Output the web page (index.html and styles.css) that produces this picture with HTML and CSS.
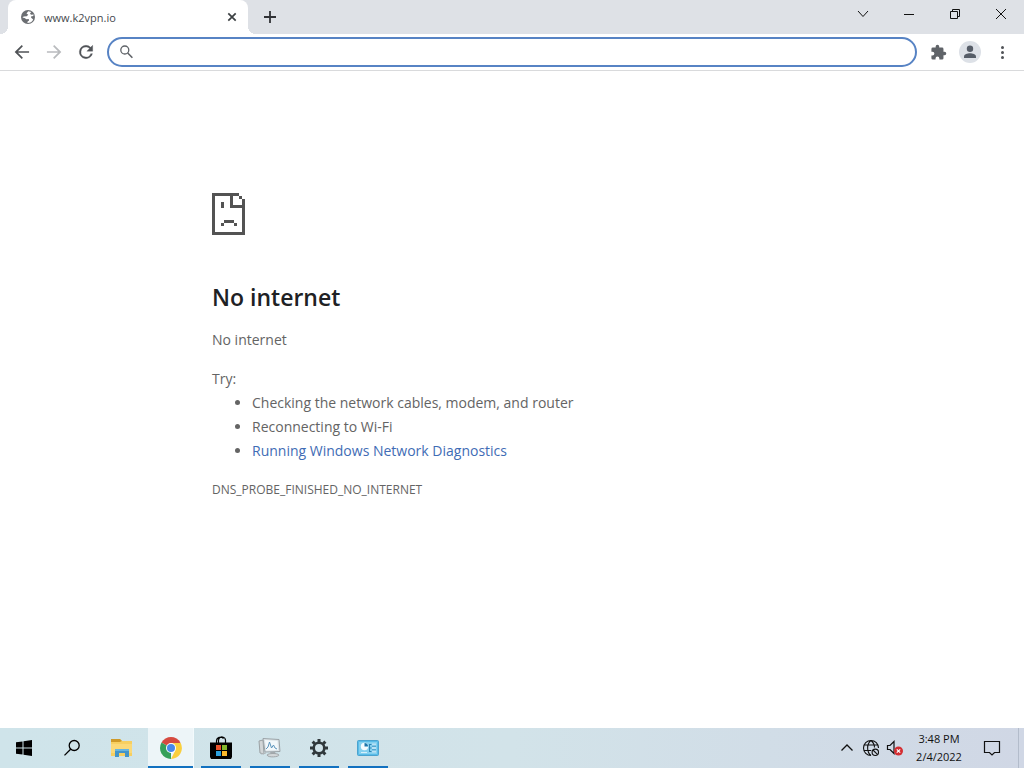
FILE: index.html
```html
<!DOCTYPE html>
<html lang="en">

	<head>
		<meta charset="UTF-8">
		<title>www.k2vpn.io</title>
		<link rel="stylesheet" href="styles.css">
	</head>

	<body>
		<header class="tabstrip">
			<div class="tab">
				<svg class="favicon" width="16" height="16" viewBox="0 0 16 16">
					<circle cx="8" cy="8" r="7" fill="#6b6e72" />
					<path d="M8.2 2.3L6.5 4.5l1.8 1.2-1.6 1.6-3 .1-1.3 1.2 2.2.4 1.8 1.3 2.3-.2.4 1.3-1.5 1-.2 1.6c2.6 0 5-1.4 5.8-3.6l-2-1.6-.2-1.4 2.2-.5.5-1.5-2.7.4-1-1.2 1.3-1.6z" fill="#fff" />
				</svg>
				<span class="tab-title">www.k2vpn.io</span>
				<button class="tab-close" aria-label="Close tab">
					<svg width="16" height="16" viewBox="0 0 16 16"><path d="M4.3 4.3l7.4 7.4M11.7 4.3l-7.4 7.4" fill="none" stroke="#3c4043" stroke-width="1.7" /></svg>
				</button>
			</div>
			<button class="new-tab" aria-label="New tab">
				<svg width="16" height="16" viewBox="0 0 16 16"><path d="M8 2v12M2 8h12" fill="none" stroke="#303236" stroke-width="1.8" /></svg>
			</button>
			<div class="window-controls">
				<button aria-label="Search tabs"><svg width="12" height="12" viewBox="0 0 12 12"><path d="M1 3l5 5.5L11 3" /></svg></button>
				<button aria-label="Minimize"><svg width="12" height="12" viewBox="0 0 12 12"><path d="M1 6.5h10" /></svg></button>
				<button aria-label="Restore"><svg width="12" height="12" viewBox="0 0 12 12"><path d="M1.5 3.5h7v7h-7zM3.5 3.5v-2h7v7h-2" /></svg></button>
				<button aria-label="Close"><svg width="12" height="12" viewBox="0 0 12 12"><path d="M1 1l10 10M11 1L1 11" /></svg></button>
			</div>
		</header>

		<nav class="toolbar">
			<div class="tools">
				<button aria-label="Back"><svg width="20" height="20" viewBox="0 0 24 24"><path d="M20.5 11H7.2l5.9-5.9L11.7 3.5 3.2 12l8.5 8.5 1.4-1.6L7.2 13h13.3z" fill="#505357" /></svg></button>
				<button aria-label="Forward" disabled><svg width="20" height="20" viewBox="0 0 24 24"><path d="M3.5 11h13.3l-5.9-5.9 1.4-1.6 8.5 8.5-8.5 8.5-1.4-1.6 5.9-5.9H3.5z" fill="#b9bbbe" /></svg></button>
				<button aria-label="Reload"><svg width="20" height="20" viewBox="0 0 24 24"><path d="M17.65 6.35A7.96 7.96 0 0 0 12 4a8 8 0 1 0 7.73 10h-2.08A6 6 0 1 1 12 6c1.66 0 3.14.69 4.22 1.78L13 11h7V4z" fill="#505357" stroke="#505357" stroke-width="0.4" /></svg></button>
			</div>
			<form class="omnibox">
				<svg width="16" height="16" viewBox="0 0 16 16"><circle cx="5.8" cy="6" r="4" fill="none" stroke="#5f6368" stroke-width="1.3" /><path d="M8.7 9l4.7 4.7" stroke="#5f6368" stroke-width="1.6" /></svg>
				<input type="text" aria-label="Address and search bar">
			</form>
			<div class="tools">
				<button aria-label="Extensions"><svg width="17" height="17" viewBox="0 0 24 24"><path d="M20.5 11H19V7a2 2 0 0 0-2-2h-4V3.5a2.5 2.5 0 0 0-5 0V5H4a2 2 0 0 0-2 2v3.8h1.5a2.7 2.7 0 0 1 0 5.4H2V20a2 2 0 0 0 2 2h3.8v-1.5a2.7 2.7 0 0 1 5.4 0V22H17a2 2 0 0 0 2-2v-4h1.5a2.5 2.5 0 0 0 0-5z" fill="#5f6368" /></svg></button>
				<button class="avatar" aria-label="Profile"><svg width="22" height="22" viewBox="0 0 22 22"><circle cx="11" cy="11" r="11" fill="#dde1e7" /><circle cx="11" cy="7.8" r="3.2" fill="#565d68" /><path d="M5 17v-1.6c0-2.2 3.5-3.2 6-3.2s6 1 6 3.2V17z" fill="#565d68" /></svg></button>
				<button aria-label="Menu"><svg width="16" height="16" viewBox="0 0 16 16"><g fill="#505357"><circle cx="8.5" cy="3.5" r="1.5" /><circle cx="8.5" cy="8.5" r="1.5" /><circle cx="8.5" cy="13.5" r="1.5" /></g></svg></button>
			</div>
		</nav>

		<main class="page">
			<div class="error">
				<!-- sad page, 3px per pixel -->
				<svg class="sad-page" width="33" height="42" viewBox="0 0 33 42">
					<path d="M0 0h27v3H3v36h27V15H18V3h3v9h9V6h3v36H0zM27 3h3v3h-3zM9 9h3v6H9zM12 27h10v3H12zM9 30h3v3H9zM22 30h3v3h-3z" fill="#535353" shape-rendering="crispEdges" />
				</svg>
				<h1>No internet</h1>
				<p>No internet</p>
				<div class="suggestions">
					<p>Try:</p>
					<ul>
						<li>Checking the network cables, modem, and router</li>
						<li>Reconnecting to Wi-Fi</li>
						<li><a href="#">Running Windows Network Diagnostics</a></li>
					</ul>
				</div>
				<div class="error-code">DNS_PROBE_FINISHED_NO_INTERNET</div>
			</div>
		</main>

		<footer class="taskbar">
			<div class="system">
				<button aria-label="Start"><svg width="16" height="16" viewBox="0 0 16 16"><path d="M0 2.3L6.5 1.4v6.1H0zM7.5 1.2L16 0v7.5H7.5zM0 8.5h6.5v6.1L0 13.7zM7.5 8.5H16V16l-8.5-1.2z" /></svg></button>
				<button aria-label="Search"><svg width="18" height="18" viewBox="0 0 18 18"><g fill="none" stroke="#000" stroke-width="1.3"><circle cx="11.2" cy="6.5" r="5" /><path d="M7.6 10.2L1.5 16.4" /></g></svg></button>
			</div>
			<div class="apps">
				<button aria-label="File Explorer">
					<svg width="24" height="20" viewBox="0 0 24 20">
						<path d="M1 1h9l2 2h10v15H1z" fill="#f7cf60" />
						<path d="M1 1h9l2 2-2 1H1z" fill="#cf9a29" />
						<path d="M1 6h21v9H1z" fill="#fbd978" />
						<path d="M5 11h14v8h-4v-4H9v4H5z" fill="#4495c9" />
						<path d="M5 11h14v2H5z" fill="#67b5df" />
					</svg>
				</button>
				<button class="running current" aria-label="Google Chrome">
					<svg width="22" height="22" viewBox="0 0 22 22">
						<path d="M11 11L1.5 5.5A11 11 0 0 1 20.5 5.5z" fill="#d64a40" />
						<path d="M11 11V22A11 11 0 0 1 1.5 5.5z" fill="#36a05a" />
						<path d="M11 6h9.7A11 11 0 0 1 11 22l4.3-8.5z" fill="#f9cf3e" />
						<circle cx="11" cy="11" r="5" fill="#fff" />
						<circle cx="11" cy="11" r="4" fill="#4788ec" />
					</svg>
				</button>
				<button class="running" aria-label="Microsoft Store">
					<svg width="24" height="24" viewBox="0 0 24 24">
						<path d="M7.5 7V5a4 4 0 0 1 7-2.5M16.5 7V5a3.5 3.5 0 0 0-7-1v3" fill="none" stroke="#000" stroke-width="1.2" />
						<path d="M1 6.5h22V21l-1 2H2l-1-2z" />
						<path d="M7 9h5v5H7z" fill="#e8532c" /><path d="M13 9h5v5h-5z" fill="#83b72c" />
						<path d="M7 15h5v5H7z" fill="#2aa0dd" /><path d="M13 15h5v5h-5z" fill="#fbb92b" />
					</svg>
				</button>
				<button class="running" aria-label="Network Monitor">
					<svg width="24" height="22" viewBox="0 0 24 22">
						<path d="M1 4l4-1 1 14-4-1z" fill="#d2d6d8" stroke="#9ba1a4" />
						<path d="M5 1.5l16 1 1 12-15 .5z" fill="#dce3e7" stroke="#9ca4a8" />
						<path d="M7 3l12.500 1 .5 9-12 .5z" fill="#f3f8fb" />
						<path d="M8 12l2-2 1.500-5 2 6 2-3 1.500 3 2 1" fill="none" stroke="#5c94bb" />
						<path d="M12 15h5l1 2h-5z" fill="#a4aaae" />
						<path d="M9 18c1-2 11-2 12 0 0 2-11 3-12 0z" fill="#d3d7d9" stroke="#a0a6a9" />
						<path d="M3 17l5-1" stroke="#b0b5b8" />
					</svg>
				</button>
				<button class="running" aria-label="Settings">
					<svg width="20" height="20" viewBox="0 0 20 20">
						<circle cx="10" cy="10" r="5.3" fill="none" stroke="#30383b" stroke-width="2.6" />
						<path d="M10 1v3M10 16v3M1 10h3M16 10h3M3.6 3.6l2.2 2.2M14.2 14.2l2.2 2.2M16.4 3.6l-2.2 2.2M5.8 14.2l-2.2 2.2" stroke="#30383b" stroke-width="3" />
					</svg>
				</button>
				<button class="running" aria-label="Control Panel">
					<svg width="22" height="16" viewBox="0 0 22 16">
						<rect x="0.5" y="0.5" width="21" height="15" rx="1" fill="#59bce8" stroke="#4ba3cf" />
						<path d="M2 2h18v12H2z" fill="#84d0ef" />
						<circle cx="7.5" cy="6.5" r="3.7" fill="#f4fbff" />
						<path d="M7.5 6.5V3a3.5 3.5 0 0 1 3.5 3.5z" fill="#1d76ac" />
						<path d="M4 12.5h6" stroke="#d5effa" />
						<path d="M12.5 4v8M12.5 4.5h2M12.5 8h2M12.5 11.5h2" stroke="#2f83b3" />
						<path d="M15 4.5h4M15 8h4M15 11.5h4" stroke="#b9e2f5" stroke-width="2" />
						<path d="M15 6.2h4M15 9.8h4" stroke="#3f94c3" />
					</svg>
				</button>
			</div>
			<div class="tray">
				<button aria-label="Show hidden icons"><svg width="14" height="14" viewBox="0 0 14 14"><path d="M1.5 9.5L7 4l5.5 5.5" fill="none" stroke="#111" stroke-width="1.3" /></svg></button>
				<button aria-label="No network">
					<svg width="18" height="18" viewBox="0 0 18 18">
						<g fill="none" stroke="#111" stroke-width="1.1">
							<path d="M9 16.5A7.5 7.5 0 1 1 16.500 9M9 1.5C4.500 5 4.500 13 9 16.500M9 1.5c2.500 2 3.500 4 3.500 7M2.200 6h13.600M2.200 11.500h7" />
							<circle cx="13.300" cy="13.300" r="3.200" fill="#d1d9e5" /><path d="M11 11l4.600 4.600" />
						</g>
					</svg>
				</button>
				<button aria-label="Muted">
					<svg width="18" height="18" viewBox="0 0 18 18">
						<path d="M1.5 6.5H4l4-4v12l-4-4H1.500z" fill="none" stroke="#111" stroke-width="1.2" />
						<circle cx="12.5" cy="12" r="4.5" fill="#d42e32" />
						<path d="M10.8 10.3l3.4 3.4M14.2 10.3l-3.400 3.400" stroke="#fff" stroke-width="1.2" />
					</svg>
				</button>
				<button class="clock"><span>3:48 PM</span><span>2/4/2022</span></button>
				<button class="notifications" aria-label="Notifications"><svg width="18" height="18" viewBox="0 0 18 18"><path d="M1.5 2.5h15v11h-5L9 16l-2.5-2.5h-5z" fill="none" stroke="#111" stroke-width="1.2" /></svg></button>
				<button class="show-desktop" aria-label="Show desktop"></button>
			</div>
		</footer>
	</body>

</html>
```
FILE: styles.css
```css
* {
	margin: 0;
	padding: 0;
	box-sizing: border-box;
}

body {
	min-height: 100vh;
	display: flex;
	flex-direction: column;
	font-family: "Open Sans", "Noto Sans", sans-serif;
	background: #fff;
}

button {
	display: flex;
	align-items: center;
	justify-content: center;
	border: 0;
	background: none;
	font: inherit;
}

svg {
	display: block;
	flex: none;
}

/* tab strip */
.tabstrip {
	height: 34px;
	display: flex;
	padding-left: 8px;
	background: #dee1e6;
}

.tab {
	position: relative;
	width: 240px;
	display: flex;
	align-items: center;
	padding: 0 8px 0 12px;
	border-radius: 8px 8px 0 0;
	background: #fff;
}

.tab::before,
.tab::after {
	content: "";
	position: absolute;
	bottom: 0;
	width: 8px;
	height: 8px;
}

.tab::before {
	right: 100%;
	background: radial-gradient(circle at 0 0, #dee1e6 8px, #fff 8px);
}

.tab::after {
	left: 100%;
	background: radial-gradient(circle at 100% 0, #dee1e6 8px, #fff 8px);
}

.tab-title {
	flex: 1;
	margin-left: 8px;
	font-size: 11px;
	color: #45494d;
}

.new-tab {
	width: 28px;
	margin-left: 8px;
}

.window-controls {
	display: flex;
	height: 28px;
	margin-left: auto;
}

.window-controls button {
	width: 46px;
}

.window-controls path {
	fill: none;
	stroke: #111;
}

/* toolbar */
.toolbar {
	height: 37px;
	display: flex;
	align-items: center;
	gap: 7px;
	padding: 0 8px;
	border-bottom: 1px solid #d9dadc;
}

.tools {
	display: flex;
	gap: 4px;
}

.tools button {
	width: 28px;
	height: 28px;
}

.omnibox {
	flex: 1;
	height: 30px;
	display: flex;
	align-items: center;
	gap: 8px;
	padding: 0 10px;
	border: 2px solid #5783c4;
	border-radius: 15px;
}

.omnibox input {
	flex: 1;
	border: 0;
	outline: 0;
	background: none;
	font: inherit;
	font-size: 14px;
}

/* error page */
.page {
	flex: 1;
	padding: 122px 24px 0;
}

.error {
	max-width: 600px;
	margin: 0 auto;
	font-size: 14px;
	line-height: 24px;
	color: #646464;
}

.error h1 {
	margin: 48px 0 16px;
	font-size: 23px;
	font-weight: 600;
	line-height: 29px;
	color: #202124;
}

.suggestions {
	margin-top: 15px;
}

.suggestions ul {
	padding-left: 40px;
}

.suggestions a {
	color: #3f6cb5;
	text-decoration: none;
}

.error-code {
	margin-top: 15px;
	font-size: 12px;
}

/* taskbar */
.taskbar {
	height: 40px;
	display: flex;
	background: linear-gradient(90deg, #cfe4ea, #d2e3e9 50%, #d0d7e5);
}

.system,
.apps,
.tray {
	display: flex;
}

.system button {
	width: 48px;
}

.apps {
	margin-left: 2px;
}

.apps button {
	width: 49px;
	border-left: 4px solid transparent;
	border-right: 5px solid transparent;
}

.apps .running {
	background: linear-gradient(#1271c0, #1271c0) bottom / 100% 2px no-repeat;
	background-clip: padding-box;
	background-origin: padding-box;
}

.apps .current {
	width: 47px;
	margin-right: 3px;
	border-left: 1px solid transparent;
	border-right: 1px solid #f3fafc;
	background-color: #edf5f8;
}

.tray {
	margin-left: auto;
}

.tray button {
	width: 24px;
}

.tray .clock {
	width: 64px;
	flex-direction: column;
	font-size: 11px;
	line-height: 18px;
	color: #111;
}

.tray .notifications {
	width: 41px;
}

.tray .show-desktop {
	width: 6px;
	margin-left: 6px;
	border-left: 1px solid #b3bccb;
}
```
